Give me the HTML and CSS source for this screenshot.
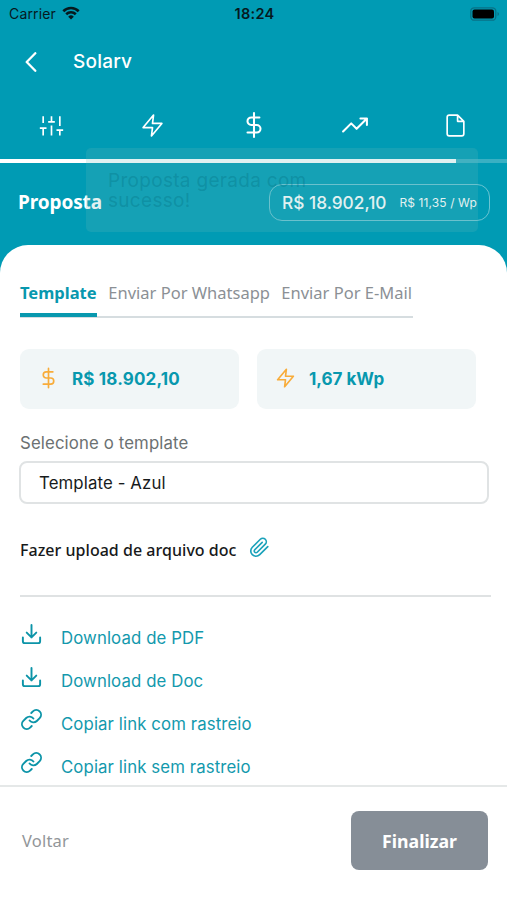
FILE: index.html
```html
<!DOCTYPE html>
<html lang="pt-BR">
<head>
<meta charset="utf-8">
<title>Solarv</title>
<link rel="stylesheet" href="styles.css">
</head>
<body>
<svg class="defs" width="0" height="0">
  <symbol id="dollar" viewBox="0 0 24 24"><path d="M12 1v22M17 5H9.500a3.500 3.500 0 0 0 0 7h5a3.500 3.500 0 0 1 0 7H6"/></symbol>
  <symbol id="zap" viewBox="0 0 24 24"><path d="M13 2 3 14h9l-1 8 10-12h-9l1-8z"/></symbol>
  <symbol id="download" viewBox="0 0 24 24"><path d="M21 15v4a2 2 0 0 1-2 2H5a2 2 0 0 1-2-2v-4M7 10l5 5 5-5M12 15V2"/></symbol>
  <symbol id="link" viewBox="0 0 24 24"><path d="M10 13a5 5 0 0 0 7.540.54l3-3a5 5 0 0 0-7.070-7.070l-1.720 1.710M14 11a5 5 0 0 0-7.540-.54l-3 3a5 5 0 0 0 7.070 7.070l1.710-1.710"/></symbol>
</svg>
<div class="app">
  <header class="header">
    <div class="status">
      <div class="carrier"><span>Carrier</span>
        <svg class="wifi" viewBox="0 0 18 14"><path d="M1.300 5.200a11 11 0 0 1 15.400 0M4.200 8.200a6.900 6.900 0 0 1 9.600 0"/><path class="dot" d="M6.200 10.700a4 4 0 0 1 5.600 0L9 13.500z"/></svg>
      </div>
      <span class="clock">18:24</span>
      <svg class="battery" viewBox="0 0 30 14"><rect class="shell" x=".8" y=".8" width="25" height="12.400" rx="3.500"/><rect x="2.500" y="2.500" width="21.500" height="9" rx="2"/><path class="shell tip" d="M27.500 5v4q1.500-.7 1.500-2t-1.500-2z"/></svg>
    </div>
    <div class="nav">
      <svg class="back" viewBox="0 0 12 20"><path d="M10.300 1.200 1.700 10l8.600 8.800"/></svg>
      <h1 class="title">Solarv</h1>
    </div>
    <nav class="steps">
      <svg class="icon sliders" viewBox="0 0 24 22"><path d="M4 20.500v-7M4 8.500V2M12 20.500V11M12 7.500V2M20 20.500v-4.500M20 11.500V2M.8 13.500h6.400M8.800 7.500h6.400M16.800 15.500h6.400"/></svg>
      <svg class="icon thin"><use href="#zap"/></svg>
      <svg class="icon"><use href="#dollar"/></svg>
      <svg class="icon" viewBox="0 0 24 24"><path d="m23 6-9.500 9.500-5-5L1 18M17 6h6v6"/></svg>
      <svg class="icon thin" viewBox="0 0 24 24"><path d="M14 2H6a2 2 0 0 0-2 2v16a2 2 0 0 0 2 2h12a2 2 0 0 0 2-2V8zM14 2v6h6"/></svg>
    </nav>
    <div class="progress"><div class="progress-bar"></div></div>
    <div class="summary">
      <h2 class="heading">Proposta</h2>
      <div class="price"><span class="total">R$ 18.902,10</span><span class="unit">R$ 11,35 / Wp</span></div>
    </div>
    <div class="toast">Proposta gerada com<br>sucesso!</div>
  </header>

  <main class="sheet">
    <div class="tabs">
      <span class="tab active">Template</span>
      <span class="tab">Enviar Por Whatsapp</span>
      <span class="tab mail">Enviar Por E-Mail</span>
    </div>
    <div class="cards">
      <div class="card"><svg class="icon"><use href="#dollar"/></svg><span class="amount">R$ 18.902,10</span></div>
      <div class="card"><svg class="icon"><use href="#zap"/></svg><span>1,67 kWp</span></div>
    </div>
    <label class="label">Selecione o template</label>
    <div class="select">Template - Azul</div>
    <div class="upload"><span>Fazer upload de arquivo doc</span>
      <svg class="clip" viewBox="0 0 24 24"><path d="m21.440 11.050-9.190 9.190a6 6 0 0 1-8.490-8.490l9.190-9.190a4 4 0 0 1 5.660 5.660l-9.200 9.190a2 2 0 0 1-2.830-2.830l8.490-8.480"/></svg>
    </div>
    <ul class="actions">
      <li><svg class="icon"><use href="#download"/></svg><span>Download de PDF</span></li>
      <li><svg class="icon"><use href="#download"/></svg><span>Download de Doc</span></li>
      <li><svg class="icon"><use href="#link"/></svg><span>Copiar link com rastreio</span></li>
      <li><svg class="icon"><use href="#link"/></svg><span>Copiar link sem rastreio</span></li>
    </ul>
  </main>

  <footer class="footer">
    <span class="voltar">Voltar</span>
    <button class="finish">Finalizar</button>
  </footer>
</div>
</body>
</html>
```
FILE: styles.css
```css
* { box-sizing: border-box; }
body { margin: 0; background: #fff; font-family: Inter, sans-serif; }
h1, h2, ul { margin: 0; padding: 0; }
svg { fill: none; stroke: currentColor; stroke-width: 2; stroke-linecap: round; stroke-linejoin: round; flex: none; display: block; }
.defs { position: absolute; }
.app { width: 507px; height: 900px; display: flex; flex-direction: column; overflow: hidden; background: #009bb4; }
.header { position: relative; height: 245px; color: #fff; flex: none; }
.status { height: 27px; display: grid; grid-template-columns: 1fr auto 1fr; align-items: center; padding: 0 7px 0 9px; color: #06191e; font-size: 14px; }
.carrier { display: flex; align-items: center; gap: 6px; letter-spacing: .15px; }
.wifi { width: 18px; height: 14px; margin-top: -2px; stroke-width: 2.600; stroke-linecap: butt; }
.wifi .dot { fill: currentColor; stroke: none; }
.clock { font-weight: 600; font-size: 14.500px; letter-spacing: .3px; }
.battery { justify-self: end; width: 30px; height: 14px; stroke: none; fill: #000; }
.battery .shell { fill: none; stroke: #087286; stroke-width: 1.300; }
.battery .tip { fill: #087286; stroke: none; }
.nav { height: 69px; display: flex; align-items: center; padding-left: 25px; }
.back { width: 12px; height: 20px; stroke-width: 2.300; }
.title { margin-left: 36px; font-size: 19px; font-weight: 500; line-height: 24px; letter-spacing: .2px; }
.steps { height: 63px; padding-bottom: 5px; display: grid; grid-template-columns: repeat(5, 101px); align-items: center; justify-items: center; justify-content: center; }
.steps .icon { width: 26px; height: 26px; stroke-width: 1.900; }
.steps .thin { width: 25px; height: 25px; stroke-width: 1.600; }
.steps .sliders { width: 25px; height: 23px; stroke-width: 1.600; stroke-linecap: butt; }
.progress { height: 4px; background: #39b0c3; }
.progress-bar { width: 456px; height: 4px; background: #fff; }
.summary { height: 78px; display: flex; justify-content: space-between; align-items: center; padding: 0 17px 0 18px; }
.heading { font: 700 19px/24px "Noto Sans", sans-serif; letter-spacing: -.1px; }
.price { width: 221px; height: 37px; border: 1px solid #6bc4d2; border-radius: 13px; display: flex; align-items: center; justify-content: space-between; padding: 0 12px; white-space: nowrap; }
.total { font-size: 17.300px; font-weight: 500; }
.unit { font-size: 12px; letter-spacing: .1px; }
.toast { position: absolute; left: 86px; top: 148px; width: 392px; height: 84px; padding: 23px 22px; border-radius: 5px; background: rgba(105, 185, 183, .2); color: rgba(0, 105, 122, .3); font-size: 19px; line-height: 19.500px; letter-spacing: .3px; }
.sheet { flex: 1; min-height: 0; background: #fff; border-radius: 28px 28px 0 0; padding: 30px 16px 0 20px; }
.tabs { height: 43px; width: 393px; display: flex; justify-content: space-between; line-height: 36px; font-family: "Noto Sans", sans-serif; font-size: 16.500px; color: #8b9095; border-bottom: 2px solid #d6dde0; white-space: nowrap; }
.tab { height: 42px; }
.active { width: 77px; color: #0898ae; font-weight: 700; border-bottom: 4px solid #0898ae; }
.mail { margin-right: 1px; }
.cards { display: flex; gap: 18px; margin-top: 31px; }
.card { width: 219px; height: 60px; border-radius: 9px; background: #f1f6f7; color: #0898ae; display: flex; align-items: center; padding-left: 18px; font-size: 17px; font-weight: 700; }
.card .icon { width: 21px; height: 22px; margin: -2px 13px 0 0; color: #f8ac3a; stroke-width: 1.900; }
.amount { letter-spacing: .16px; }
.label { display: block; margin-top: 23px; font-size: 16.800px; letter-spacing: .12px; line-height: 22px; color: #6b7172; }
.select { width: 470px; height: 43px; margin: 7px 0 0 -1px; border: 2px solid #e0e3e4; border-radius: 8px; padding-left: 18px; line-height: 40px; font-size: 16.800px; letter-spacing: .12px; color: #171b1c; }
.upload { height: 93px; display: flex; align-items: center; border-bottom: 2px solid #dfe2e3; color: #17191a; font: 500 16px/24px "Noto Sans", sans-serif; letter-spacing: .03px; white-space: nowrap; }
.clip { width: 21px; height: 21px; margin: -5px 0 0 12px; color: #1ba2ba; stroke-width: 1.900; }
.actions { list-style: none; padding-top: 20px; color: #1399ad; }
.actions li { height: 42.800px; display: flex; align-items: center; font-size: 16.800px; letter-spacing: .1px; white-space: nowrap; }
.actions .icon { width: 23px; height: 23px; margin: -8px 18px 0 0; color: #0c94a8; }
.footer { height: 115px; flex: none; background: #fff; border-top: 2px solid #e5e8e8; display: flex; align-items: center; justify-content: space-between; padding: 0 19px 6px 22px; font-family: "Noto Sans", sans-serif; }
.voltar { color: #929699; font-size: 16.500px; letter-spacing: .2px; }
.finish { width: 137px; height: 59px; border: 0; border-radius: 8px; background: #868e97; color: #fff; font: 700 17.700px "Noto Sans", sans-serif; }
```
